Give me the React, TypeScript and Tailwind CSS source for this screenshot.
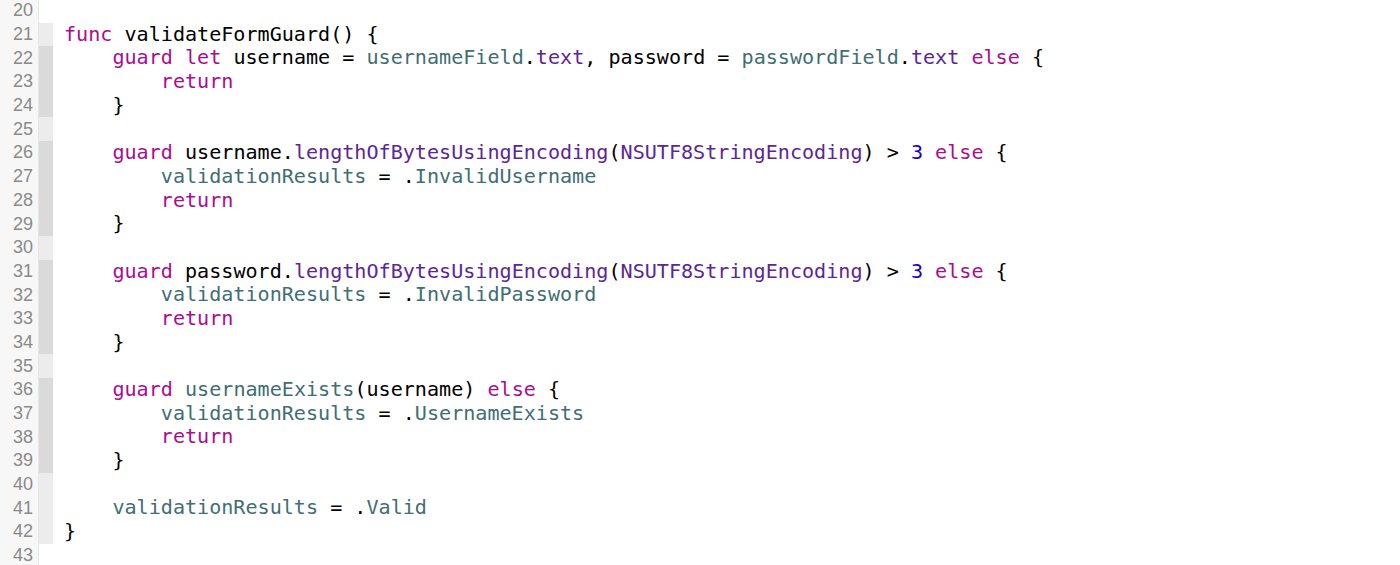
type Tok = [string, string?];

const K = "text-[#aa0d91]"; // keyword
const T = "text-[#3f6e74]"; // project identifiers
const P = "text-[#5c2699]"; // sdk / properties
const N = "text-[#1c00cf]"; // numbers

type Line = { n: number; mark: "none" | "light" | "dark"; toks: Tok[] };

const lines: Line[] = [
  { n: 20, mark: "none", toks: [] },
  {
    n: 21,
    mark: "light",
    toks: [["func", K], [" validateFormGuard() {"]],
  },
  {
    n: 22,
    mark: "dark",
    toks: [
      ["    "],
      ["guard", K],
      [" "],
      ["let", K],
      [" username = "],
      ["usernameField", T],
      ["."],
      ["text", P],
      [", password = "],
      ["passwordField", T],
      ["."],
      ["text", P],
      [" "],
      ["else", K],
      [" {"],
    ],
  },
  { n: 23, mark: "dark", toks: [["        "], ["return", K]] },
  { n: 24, mark: "dark", toks: [["    }"]] },
  { n: 25, mark: "light", toks: [] },
  {
    n: 26,
    mark: "dark",
    toks: [
      ["    "],
      ["guard", K],
      [" username."],
      ["lengthOfBytesUsingEncoding", P],
      ["("],
      ["NSUTF8StringEncoding", P],
      [") > "],
      ["3", N],
      [" "],
      ["else", K],
      [" {"],
    ],
  },
  {
    n: 27,
    mark: "dark",
    toks: [["        "], ["validationResults", T], [" = ."], ["InvalidUsername", T]],
  },
  { n: 28, mark: "dark", toks: [["        "], ["return", K]] },
  { n: 29, mark: "dark", toks: [["    }"]] },
  { n: 30, mark: "light", toks: [] },
  {
    n: 31,
    mark: "dark",
    toks: [
      ["    "],
      ["guard", K],
      [" password."],
      ["lengthOfBytesUsingEncoding", P],
      ["("],
      ["NSUTF8StringEncoding", P],
      [") > "],
      ["3", N],
      [" "],
      ["else", K],
      [" {"],
    ],
  },
  {
    n: 32,
    mark: "dark",
    toks: [["        "], ["validationResults", T], [" = ."], ["InvalidPassword", T]],
  },
  { n: 33, mark: "dark", toks: [["        "], ["return", K]] },
  { n: 34, mark: "dark", toks: [["    }"]] },
  { n: 35, mark: "light", toks: [] },
  {
    n: 36,
    mark: "dark",
    toks: [
      ["    "],
      ["guard", K],
      [" "],
      ["usernameExists", T],
      ["(username) "],
      ["else", K],
      [" {"],
    ],
  },
  {
    n: 37,
    mark: "dark",
    toks: [["        "], ["validationResults", T], [" = ."], ["UsernameExists", T]],
  },
  { n: 38, mark: "dark", toks: [["        "], ["return", K]] },
  { n: 39, mark: "dark", toks: [["    }"]] },
  { n: 40, mark: "light", toks: [] },
  {
    n: 41,
    mark: "light",
    toks: [["    "], ["validationResults", T], [" = ."], ["Valid", T]],
  },
  { n: 42, mark: "light", toks: [["}"]] },
  { n: 43, mark: "none", toks: [] },
];

const markClass = {
  none: "bg-white",
  light: "bg-[#ececec]",
  dark: "bg-[#dadada]",
};

export default function App() {
  return (
    <div className="w-[1400px] h-[565px] overflow-hidden bg-white">
      <div className="flex flex-col -mt-[1px]">
        {lines.map((l) => (
          <div key={l.n} className="flex h-[23.7px]">
            <div className="w-[39px] shrink-0 bg-[#f7f7f7] border-r border-[#e6e6e6] flex items-center justify-end pr-[5px] text-[18px] text-[#8a8a8a] font-['Liberation_Sans',sans-serif]">
              {l.n}
            </div>
            <div className={`w-[14px] shrink-0 ${markClass[l.mark]}`} />
            <pre className="pl-[11px] flex items-center text-[20.1px] leading-[23.7px] text-black font-['DejaVu_Sans_Mono',monospace]">
              {l.toks.map((t, i) => (
                <span key={i} className={t[1]}>
                  {t[0]}
                </span>
              ))}
            </pre>
          </div>
        ))}
      </div>
    </div>
  );
}
